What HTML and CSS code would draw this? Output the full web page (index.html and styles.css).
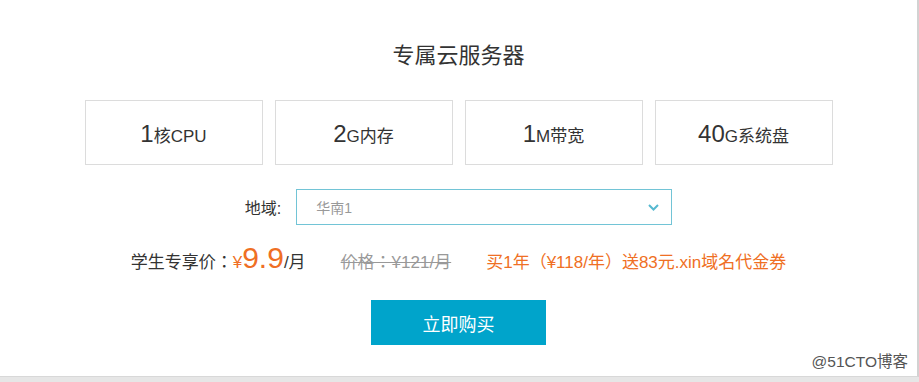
FILE: index.html
```html
<!DOCTYPE html>
<html lang="zh-CN">
<head>
<meta charset="utf-8">
<title>专属云服务器</title>
<link rel="stylesheet" href="styles.css">
</head>
<body>
<div class="card">
  <h1 class="title">专属云服务器</h1>
  <div class="specs">
    <div class="spec"><span class="num">1</span><span class="unit">核CPU</span></div>
    <div class="spec"><span class="num">2</span><span class="unit">G内存</span></div>
    <div class="spec"><span class="num">1</span><span class="unit">M带宽</span></div>
    <div class="spec"><span class="num">40</span><span class="unit">G系统盘</span></div>
  </div>
  <div class="region">
    <span class="region-label">地域:</span>
    <div class="select">
      <span class="select-value">华南1</span>
      <svg class="chevron" width="11" height="7" viewBox="0 0 11 7"><polyline points="1,1 5.5,5.5 10,1" fill="none" stroke="#56b9d0" stroke-width="2"/></svg>
    </div>
  </div>
  <div class="prices">
    <span class="student">学生专享价：<span class="yen">¥</span><span class="big">9.9</span>/月</span>
    <span class="old">价格：¥121/月</span>
    <span class="promo">买1年（¥118/年）送83元.xin域名代金券</span>
  </div>
  <div class="actions">
    <button class="buy">立即购买</button>
  </div>
  <div class="watermark">@51CTO博客</div>
</div>
</body>
</html>
```

FILE: styles.css
```css
* { box-sizing: border-box; }
html, body { margin: 0; padding: 0; }
body {
  background: #e6e6e6;
  font-family: "Liberation Sans", "Noto Sans CJK SC", sans-serif;
  color: #333;
  width: 919px;
  height: 382px;
  overflow: hidden;
}
.card {
  position: relative;
  width: 919px;
  height: 377px;
  background: #fff;
  border-right: 2px solid #d2d2d2;
  border-bottom: 1px solid #d8d8d8;
  display: flex;
  flex-direction: column;
  align-items: center;
}
.title {
  margin: 41px 0 0;
  font-size: 22px;
  line-height: 30px;
  font-weight: normal;
  color: #333;
}
.specs {
  margin-top: 29px;
  display: flex;
  gap: 12px;
}
.spec {
  width: 178px;
  height: 65px;
  border: 1px solid #dcdcdc;
  display: flex;
  align-items: baseline;
  justify-content: center;
  padding-top: 18px;
  line-height: 30px;
  color: #333;
}
.num { font-size: 24px; }
.unit { font-size: 17px; }
.region {
  margin-top: 24px;
  display: flex;
  align-items: center;
  gap: 15px;
}
.region-label {
  font-size: 16px;
  color: #333;
}
.select {
  width: 376px;
  height: 36px;
  border: 1px solid #72c4d6;
  display: flex;
  align-items: center;
  justify-content: space-between;
  padding: 0 12px 0 19px;
}
.select-value {
  font-size: 14px;
  color: #999;
}
.chevron { display: block; }
.prices {
  margin-top: 18px;
  height: 30px;
  display: flex;
  align-items: baseline;
  gap: 35px;
  font-family: "Liberation Sans", "Noto Sans CJK JP", sans-serif;
  font-feature-settings: "locl" 0;
  font-size: 17px;
  line-height: 30px;
}
.student { color: #333; }
.yen { color: #ef6f24; font-size: 17px; }
.big { color: #ef6f24; font-size: 30px; }
.old {
  color: #999;
  text-decoration: line-through;
}
.promo { color: #ef6f24; }
.actions {
  margin-top: 27px;
}
.buy {
  width: 175px;
  height: 45px;
  border: 0;
  background: #00a4cb;
  color: #fff;
  font-family: "Liberation Sans", "Noto Sans CJK SC", sans-serif;
  font-size: 18px;
  cursor: pointer;
}
.watermark {
  position: absolute;
  right: 9px;
  bottom: 4px;
  font-size: 15.5px;
  line-height: 20px;
  color: #555;
}
```
